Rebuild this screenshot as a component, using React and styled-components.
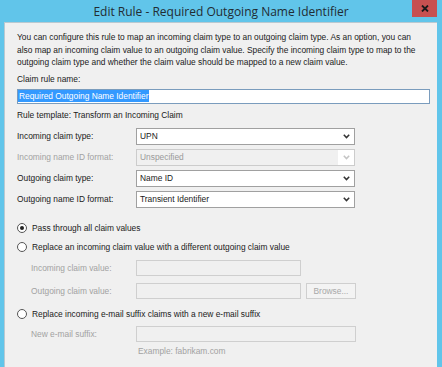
import React from "react";
import styled, { createGlobalStyle } from "styled-components";

const Global = createGlobalStyle`
  html, body { margin: 0; padding: 0; }
  body { background: #61c5ea; font-family: "Liberation Sans", Arial, sans-serif; }
`;

const Frame = styled.div`
  width: 442px;
  height: 367px;
  background: #61c5ea;
  display: flex;
  flex-direction: column;
  overflow: hidden;
`;

const TitleBar = styled.div`
  height: 22px;
  position: relative;
  display: flex;
  align-items: center;
  justify-content: center;
  flex-shrink: 0;
`;

const Title = styled.div`
  font-family: "Open Sans", "Liberation Sans", sans-serif;
  font-size: 12px;
  color: #222c33;
`;

const Close = styled.div`
  position: absolute;
  right: 5px;
  top: 0;
  width: 25px;
  height: 17px;
  background: #c75050;
  display: flex;
  align-items: center;
  justify-content: center;
  svg { display: block; }
`;

const Panel = styled.div`
  flex: 1;
  margin: 0 5px 0 4px;
  background: #f0f0f0;
  border-left: 1px solid #b9c9d1;
  border-top: 1px solid #b9c9d1;
  padding: 8px 0 0 12px;
  font-size: 8.4px;
  color: #1a1a1a;
`;

const Para = styled.p`
  margin: 0;
  line-height: 12.5px;
  width: 410px;
`;

const Label = styled.div`
  color: ${(p) => (p.disabled ? "#a2a2a2" : "#1a1a1a")};
  line-height: 12px;
`;

const NameInput = styled.div`
  margin-top: 4px;
  width: 411px;
  height: 13px;
  border: 1px solid #7a9cbd;
  background: #fff;
  display: flex;
  align-items: center;
`;

const Selected = styled.span`
  background: #3399ff;
  color: #fff;
  line-height: 12px;
  padding: 0 1px;
`;

const Template = styled.div`
  margin-top: 5px;
  line-height: 12px;
`;

const Rows = styled.div`
  margin-top: 7px;
  display: flex;
  flex-direction: column;
  gap: 4px;
`;

const Row = styled.div`
  display: grid;
  grid-template-columns: ${(p) => p.labelWidth}px auto auto;
  align-items: center;
  column-gap: 5px;
  padding-left: ${(p) => p.indent || 0}px;
  justify-content: start;
`;

const Select = styled.div`
  width: 217px;
  height: 15px;
  border: 1px solid ${(p) => (p.disabled ? "#cccccc" : "#a0a0a0")};
  background: #fff;
  display: flex;
  align-items: center;
  color: ${(p) => (p.disabled ? "#9a9a9a" : "#1a1a1a")};
  box-sizing: content-box;
`;

const SelectText = styled.span`
  flex: 1;
  padding-left: 3px;
  background: ${(p) => (p.disabled ? "#f0f0f0" : "#fff")};
  align-self: stretch;
  display: flex;
  align-items: center;
`;

const Arrow = styled.span`
  width: 16px;
  display: flex;
  align-items: center;
  justify-content: center;
  align-self: stretch;
  background: #fff;
`;

const RadioGroup = styled.div`
  margin-top: 14px;
`;

const RadioRow = styled.div`
  display: flex;
  align-items: center;
  gap: 5px;
  height: 13px;
  margin-top: ${(p) => p.mt || 0}px;
`;

const RadioCircle = styled.span`
  width: 10px;
  height: 10px;
  border-radius: 50%;
  border: 1px solid #555;
  background: #fff;
  box-sizing: border-box;
  display: flex;
  align-items: center;
  justify-content: center;
  &::after {
    content: "";
    display: ${(p) => (p.checked ? "block" : "none")};
    width: 4px;
    height: 4px;
    border-radius: 50%;
    background: #222;
  }
`;

const TextBox = styled.div`
  width: ${(p) => p.w}px;
  height: 14px;
  border: 1px solid #cfcfcf;
  background: #f0f0f0;
`;

const Button = styled.div`
  width: 48px;
  height: 14px;
  border: 1px solid #cfcfcf;
  background: #f3f3f3;
  color: #a8a8a8;
  display: flex;
  align-items: center;
  justify-content: center;
`;

const SubRows = styled.div`
  margin-top: ${(p) => p.mt}px;
  display: flex;
  flex-direction: column;
  gap: 7px;
`;

const Hint = styled.div`
  color: #a2a2a2;
  margin: 4px 0 0 121px;
`;

const Chevron = ({ c = "#333" }) => (
  <svg width="7" height="5" viewBox="0 0 7 5">
    <path d="M0.8 0.8 L3.5 3.6 L6.2 0.8" stroke={c} strokeWidth="1.5" fill="none" />
  </svg>
);

const SelectBox = ({ value, disabled }) => (
  <Select disabled={disabled}>
    <SelectText disabled={disabled}>{value}</SelectText>
    <Arrow>
      <Chevron c={disabled ? "#c4c4c4" : "#333"} />
    </Arrow>
  </Select>
);

export default function App() {
  return (
    <Frame>
      <Global />
      <TitleBar>
        <Title>Edit Rule - Required Outgoing Name Identifier</Title>
        <Close>
          <svg width="8" height="7" viewBox="0 0 8 7">
            <path d="M1 0.5 L7 6.5 M7 0.5 L1 6.5" stroke="#1a1a1a" strokeWidth="1.8" />
          </svg>
        </Close>
      </TitleBar>
      <Panel>
        <Para>
          You can configure this rule to map an incoming claim type to an outgoing claim type. As an option, you can
          also map an incoming claim value to an outgoing claim value. Specify the incoming claim type to map to the
          outgoing claim type and whether the claim value should be mapped to a new claim value.
        </Para>
        <Label style={{ marginTop: 4 }}>Claim rule name:</Label>
        <NameInput>
          <Selected>Required Outgoing Name Identifier</Selected>
        </NameInput>
        <Template>Rule template: Transform an Incoming Claim</Template>
        <Rows>
          <Row labelWidth={114}>
            <Label>Incoming claim type:</Label>
            <SelectBox value="UPN" />
          </Row>
          <Row labelWidth={114}>
            <Label disabled>Incoming name ID format:</Label>
            <SelectBox value="Unspecified" disabled />
          </Row>
          <Row labelWidth={114}>
            <Label>Outgoing claim type:</Label>
            <SelectBox value="Name ID" />
          </Row>
          <Row labelWidth={114}>
            <Label>Outgoing name ID format:</Label>
            <SelectBox value="Transient Identifier" />
          </Row>
        </Rows>
        <RadioGroup>
          <RadioRow>
            <RadioCircle checked />
            <span>Pass through all claim values</span>
          </RadioRow>
          <RadioRow mt={6}>
            <RadioCircle />
            <span>Replace an incoming claim value with a different outgoing claim value</span>
          </RadioRow>
          <SubRows mt={6}>
            <Row labelWidth={100} indent={14}>
              <Label disabled>Incoming claim value:</Label>
              <TextBox w={163} />
            </Row>
            <Row labelWidth={100} indent={14}>
              <Label disabled>Outgoing claim value:</Label>
              <TextBox w={163} />
              <Button>Browse...</Button>
            </Row>
          </SubRows>
          <RadioRow mt={9}>
            <RadioCircle />
            <span>Replace incoming e-mail suffix claims with a new e-mail suffix</span>
          </RadioRow>
          <SubRows mt={5}>
            <Row labelWidth={100} indent={14}>
              <Label disabled>New e-mail suffix:</Label>
              <TextBox w={218} />
            </Row>
          </SubRows>
          <Hint>Example: fabrikam.com</Hint>
        </RadioGroup>
      </Panel>
    </Frame>
  );
}
